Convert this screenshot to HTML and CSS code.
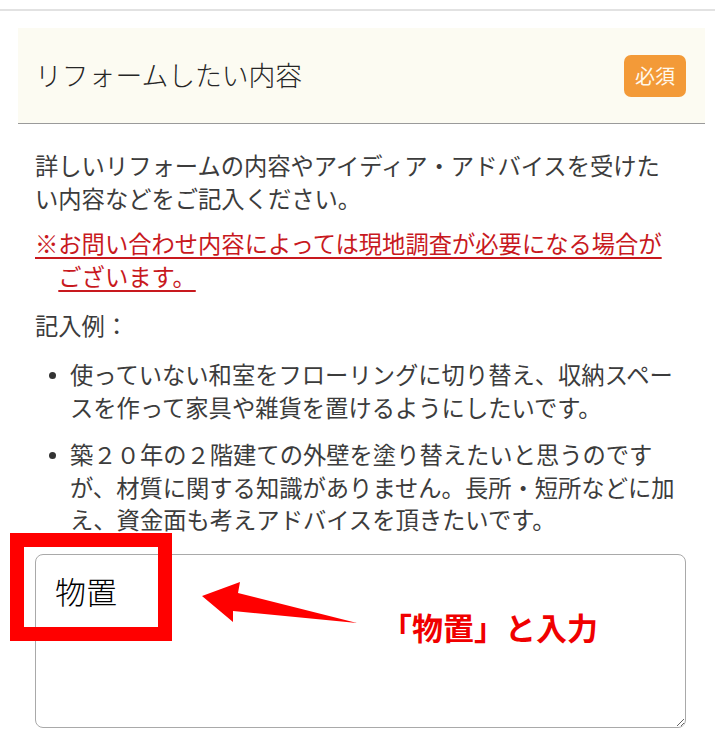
FILE: index.html
```html
<!DOCTYPE html>
<html lang="ja">
<head>
<meta charset="utf-8">
<title>リフォームしたい内容</title>
<link rel="stylesheet" href="styles.css">
</head>
<body>
<div class="top-rule"></div>
<section class="field">
  <div class="field-head">
    <h2 class="field-title">リフォームしたい内容</h2>
    <span class="badge">必須</span>
  </div>
  <div class="field-body">
    <p class="lead">詳しいリフォームの内容やアイディア・アドバイスを受けたい内容などをご記入ください。</p>
    <p class="notice">※お問い合わせ内容によっては現地調査が必要になる場合がございます。</p>
    <p class="example-label">記入例：</p>
    <ul class="examples">
      <li>使っていない和室をフローリングに切り替え、収納スペースを作って家具や雑貨を置けるようにしたいです。</li>
      <li>築２０年の２階建ての外壁を塗り替えたいと思うのですが、材質に関する知識がありません。長所・短所などに加え、資金面も考えアドバイスを頂きたいです。</li>
    </ul>
    <div class="input-wrap">
      <textarea class="input">物置</textarea>
      <div class="mark-box"></div>
      <svg class="mark-arrow" width="200" height="50" viewBox="0 0 200 50">
        <polygon points="2,17 40,3 38,14 157,44 33,32 33,43" fill="#ff0000"/>
      </svg>
      <div class="mark-label">「物置」と入力</div>
    </div>
  </div>
</section>
</body>
</html>
```
FILE: styles.css
```css
html, body {
  margin: 0;
  padding: 0;
  background: #ffffff;
}
body {
  font-family: "Noto Sans CJK JP", "Noto Sans", sans-serif;
  color: #3c3c3c;
}
.top-rule {
  margin-top: 9px;
  height: 2px;
  background: #e2e2e2;
}
.field {
  margin: 17px 10px 0 18px;
}
.field-head {
  height: 95px;
  border-bottom: 1px solid #9a9a9a;
  background: #fcfbf2;
  display: flex;
  align-items: center;
  justify-content: space-between;
  padding: 0 19px 0 17px;
}
.field-title {
  margin: 0;
  font-size: 26.8px;
  font-weight: 300;
  color: #262626;
  line-height: 1.2;
}
.badge {
  background: #f39a38;
  color: #fff8ec;
  font-size: 20px;
  line-height: 26px;
  padding: 8px 11px;
  border-radius: 7px;
}
.field-body {
  padding: 0 19px 0 17px;
  font-size: 23.3px;
  line-height: 1.4;
}
.lead {
  margin: 25px 0 0 0;
  padding-right: 8px;
}
.notice {
  margin: 13px 0 0 0;
  padding-left: 1em;
  padding-right: 8px;
  text-indent: -1em;
  color: #c8191e;
  text-decoration: underline;
  text-decoration-thickness: 2px;
  text-underline-offset: 4px;
}
.example-label {
  margin: 17px 0 0 0;
}
.examples {
  list-style: none;
  margin: 16px 0 0 0;
  padding: 0;
}
.examples li {
  display: grid;
  grid-template-columns: 35px 1fr;
}
.examples li + li {
  margin-top: 15px;
}
.examples li::before {
  content: "";
  width: 7px;
  height: 7px;
  border-radius: 50%;
  background: #333;
  margin: 14px 0 0 14px;
}
.input-wrap {
  position: relative;
  margin-top: 18px;
  height: 174px;
}
.input {
  display: block;
  box-sizing: border-box;
  width: 100%;
  height: 174px;
  border: 1px solid #a9a9a9;
  border-radius: 8px;
  padding: 14px 19px;
  font-family: "Noto Sans CJK JP", sans-serif;
  font-size: 31px;
  font-weight: 300;
  line-height: 1.4;
  color: #000;
  background: #fff;
}
.mark-box {
  position: absolute;
  left: -25px;
  top: -21px;
  width: 134px;
  height: 80px;
  border: 14px solid #ff0000;
}
.mark-arrow {
  position: absolute;
  left: 165px;
  top: 25px;
}
.mark-label {
  position: absolute;
  left: 346px;
  top: 55px;
  font-size: 31px;
  line-height: 36px;
  font-weight: 700;
  color: #f00000;
  white-space: nowrap;
}
```
